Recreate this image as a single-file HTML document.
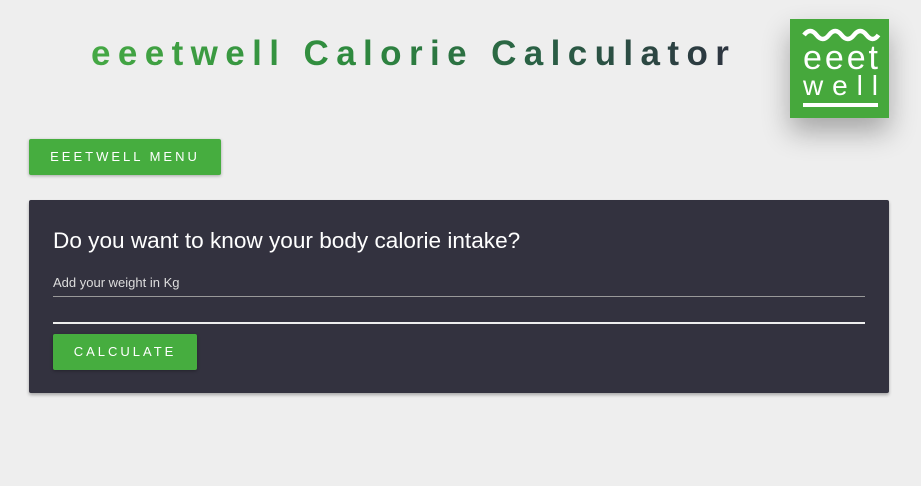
<!DOCTYPE html>
<html><head><style>
body{margin:0;width:921px;height:486px;background:#eeeeee;font-family:"Liberation Sans",sans-serif;position:relative;overflow:hidden}
.title{position:absolute;left:91px;top:34px;font-size:35px;font-weight:bold;letter-spacing:7.4px;white-space:nowrap;
background:linear-gradient(90deg,#45a844 0%,#2e8a3e 40%,#2a5f45 70%,#2d3340 100%);-webkit-background-clip:text;background-clip:text;color:transparent}
.logo{position:absolute;left:790px;top:19px;width:99px;height:99px;background:#46a83c;box-shadow:0 14px 26px rgba(0,0,0,.3)}
.btn{position:absolute;background:#46ad3f;color:#fff;font-size:13px;letter-spacing:3px;text-align:center;box-shadow:0 1px 3px rgba(0,0,0,.3);border-radius:2px}
.card{position:absolute;left:29px;top:200px;width:860px;height:193px;background:#33323f;box-shadow:0 2px 3px rgba(0,0,0,.3);border-radius:2px}
</style></head><body>
<div class="title">eeetwell Calorie Calculator</div>
<div class="logo"><svg width="99" height="99" viewBox="0 0 99 99">
<path d="M14 16 q6.2 -8 12.5 0 t12.5 0 t12.5 0 t12.5 0 t12.5 0 t12 0" fill="none" stroke="#fff" stroke-width="4.5"/>
<text x="13" y="50" fill="#fff" font-family="Liberation Sans" font-size="34" textLength="75" lengthAdjust="spacing">eeet</text>
<text x="13" y="76" fill="#fff" font-family="Liberation Sans" font-size="28" textLength="75" lengthAdjust="spacing">well</text>
<rect x="13" y="84" width="75" height="4" fill="#fff"/></svg></div>
<div class="btn" style="left:29px;top:139px;width:192px;height:36px;line-height:36px">EEETWELL MENU</div>
<div class="card">
<div style="position:absolute;left:24px;top:28px;color:#fff;font-size:22.6px;font-weight:300">Do you want to know your body calorie intake?</div>
<div style="position:absolute;left:24px;top:75px;color:#ddd;font-size:13px">Add your weight in Kg</div>
<div style="position:absolute;left:24px;top:96px;width:812px;height:1px;background:#999"></div>
<div style="position:absolute;left:24px;top:122px;width:812px;height:2px;background:#eee"></div>
<div class="btn" style="left:24px;top:134px;width:144px;height:36px;line-height:36px">CALCULATE</div>
</div>
</body></html>
